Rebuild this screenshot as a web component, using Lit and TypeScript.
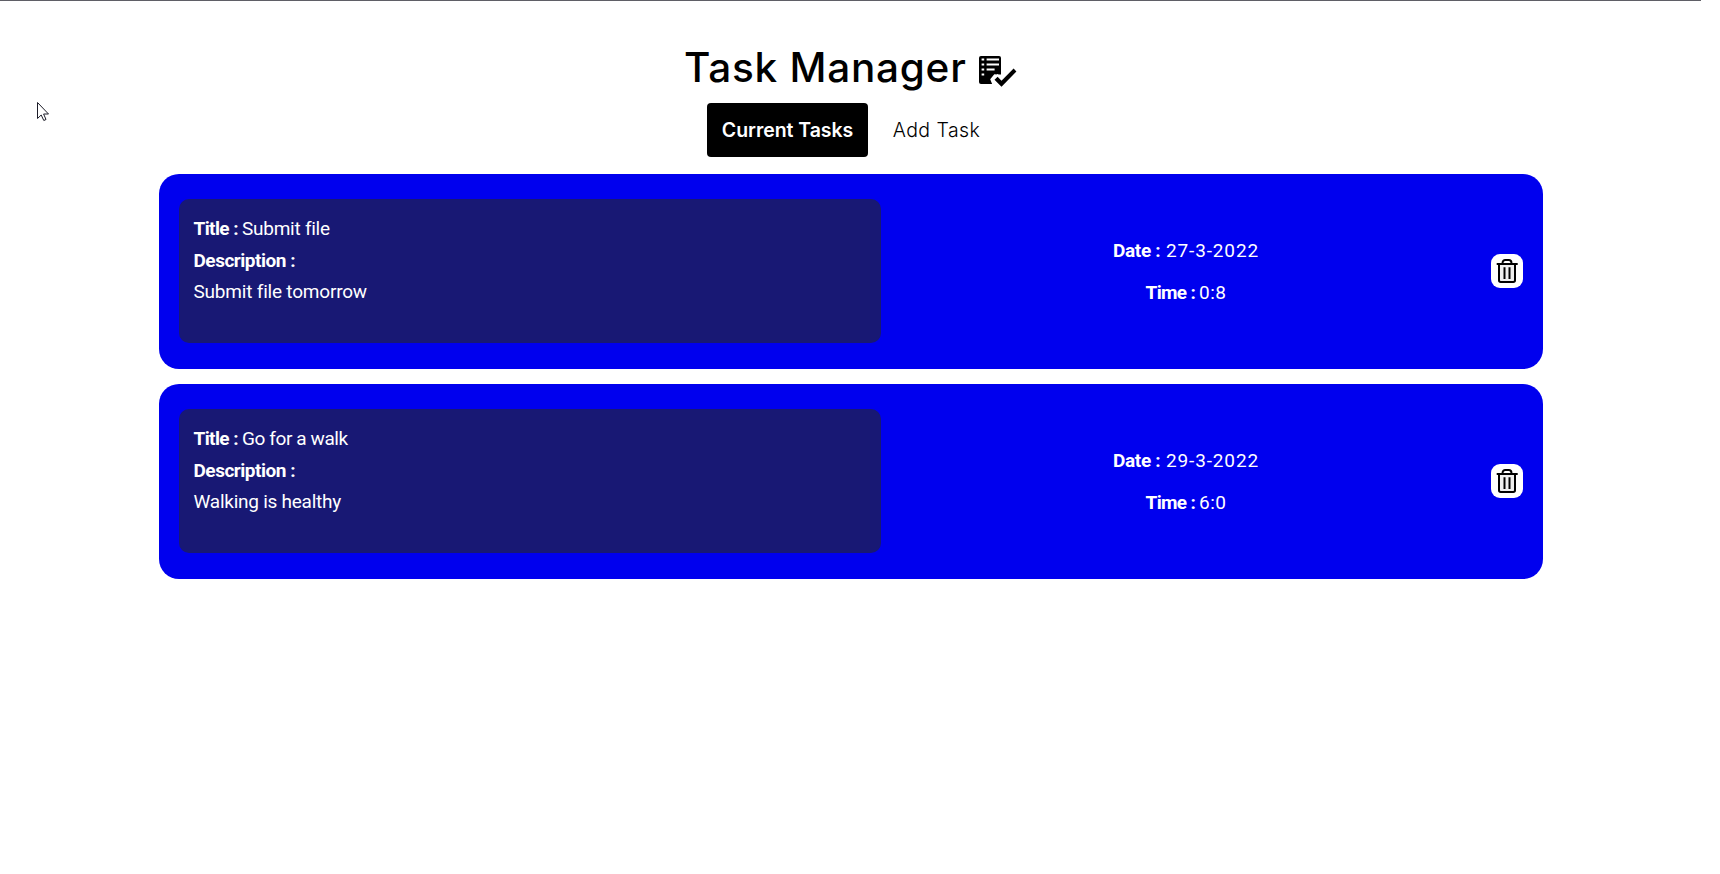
import { LitElement, html, css } from 'lit';
import { customElement, property, state } from 'lit/decorators.js';

interface Task {
  title: string;
  description: string;
  date: string;
  time: string;
}

@customElement('task-card')
class TaskCard extends LitElement {
  @property({ attribute: false }) task!: Task;

  static styles = css`
    :host {
      display: grid;
      grid-template-columns: 702px 1fr 32px;
      align-items: center;
      box-sizing: border-box;
      height: 195px;
      padding: 0 20px 1px;
      border-radius: 20px;
      background: #0000ee;
      color: #fff;
      font: 400 19px/32px Roboto, 'Noto Sans', sans-serif;
      white-space: nowrap;
    }
    .panel {
      box-sizing: border-box;
      height: 144px;
      padding: 14px 14.5px 0;
      border-radius: 10px;
      background: #181874;
    }
    .label {
      display: inline-block;
      font-weight: 700;
      letter-spacing: -0.48px;
    }
    .title-label { width: 48.5px; letter-spacing: -0.6px; }
    .date-label { width: 53px; letter-spacing: -0.35px; }
    .time-label { width: 53.5px; letter-spacing: -0.65px; }
    .when .label { text-align: left; }
    .name { letter-spacing: var(--name-tracking, -0.25px); }
    .description { line-height: 30px; letter-spacing: var(--description-tracking, -0.2px); }
    .when { text-align: center; line-height: 42px; padding-top: 1px; }
    .date { letter-spacing: 0.85px; }
    .time { letter-spacing: 0.5px; }
    button {
      width: 32px;
      height: 34px;
      padding: 0;
      border: 0;
      border-radius: 9px;
      background: #fff;
    }
    svg { display: block; }
  `;

  render() {
    const t = this.task;
    return html`
      <div class="panel">
        <div><span class="label title-label">Title :</span><span class="name">${t.title}</span></div>
        <div><span class="label">Description :</span></div>
        <div class="description">${t.description}</div>
      </div>
      <div class="when">
        <div><span class="label date-label">Date :</span><span class="date">${t.date}</span></div>
        <div><span class="label time-label">Time :</span><span class="time">${t.time}</span></div>
      </div>
      <button aria-label="Delete task">
        <svg width="32" height="34" viewBox="0 0 32 34" fill="none" stroke="#000" stroke-width="2">
          <path d="M8 10V26.2a1.7 1.7 0 0 0 1.7 1.7H22.3a1.7 1.7 0 0 0 1.7-1.7V10z" fill="#eee" />
          <path d="M5.7 10H26.7" />
          <path d="M11.6 10V8.6A2.6 2.6 0 0 1 14.2 6H17.8A2.6 2.6 0 0 1 20.4 8.6V10" />
          <path d="M13.5 13.3V25M18.5 13.3V25" />
        </svg>
      </button>
    `;
  }
}

@customElement('app-root')
class AppRoot extends LitElement {
  @state() private tasks: Task[] = [
    { title: 'Submit file', description: 'Submit file tomorrow', date: '27-3-2022', time: '0:8' },
    { title: 'Go for a walk', description: 'Walking is healthy', date: '29-3-2022', time: '6:0' },
  ];

  static styles = css`
    :host {
      display: block;
      box-sizing: border-box;
      width: 1720px;
      height: 874px;
      overflow: hidden;
      background: #fff;
      color: #000;
      font-family: Inter, sans-serif;
    }
    .edge { width: 1701px; height: 1px; background: #5f5f66; }
    .page { width: 1702px; }
    header {
      display: flex;
      justify-content: center;
      gap: 11px;
      height: 102px;
      padding-right: 1.5px;
      box-sizing: border-box;
    }
    h1 {
      margin: 41.5px 0 0;
      font-size: 40.5px;
      font-weight: 450;
      line-height: 50px;
      letter-spacing: 0.75px;
      white-space: nowrap;
    }
    .logo { margin-top: 55px; }
    nav { display: flex; justify-content: center; gap: 10px; }
    nav button {
      height: 54px;
      padding: 1px 0 0;
      border: 0;
      border-radius: 4px;
      background: none;
      color: #000;
      font: 300 19.5px/53px Inter, sans-serif;
      white-space: nowrap;
    }
    .current { width: 161px; background: #000; color: #fff; font-weight: 600; letter-spacing: -0.05px; }
    .add { width: 117px; letter-spacing: 0.45px; }
    main { display: grid; gap: 15px; width: 1384px; margin: 17px auto 0; }
    task-card:nth-child(2) { --name-tracking: -0.4px; --description-tracking: -0.25px; }
    .pointer { position: absolute; left: 36px; top: 101px; }
  `;

  render() {
    return html`
      <div class="edge"></div>
      <div class="page">
        <header>
          <h1>Task Manager</h1>
          <svg class="logo" width="39" height="33" viewBox="0 0 39 33">
            <path d="M3 0H21a2 2 0 0 1 2 2V28H3a2 2 0 0 1-2-2V2a2 2 0 0 1 2-2z" />
            <path d="M3.6 3.4h2.6M3.6 8.6h2.6M3.6 13.6h2.6M3.6 18.6h2.6M8.6 3.4H21M8.6 8.6H21M8.6 13.6h8" stroke="#fff" stroke-width="2" />
            <path d="M20.2 18.5L16.3 18.2L12.2 23.2L14.5 29H24V18.5z" fill="#fff" />
            <path d="M16.5 23.7L19.6 20.7L23.5 24.7L35.6 12.6L38.4 15.6L23.5 30.7z" stroke="#fff" stroke-width="4" />
            <path d="M16.5 23.7L19.6 20.7L23.5 24.7L35.6 12.6L38.4 15.6L23.5 30.7z" />
          </svg>
        </header>
        <nav>
          <button class="current">Current Tasks</button>
          <button class="add">Add Task</button>
        </nav>
        <main>${this.tasks.map((task) => html`<task-card .task=${task}></task-card>`)}</main>
      </div>
      <svg class="pointer" width="15" height="22" viewBox="0 0 15 22">
        <path d="M1.5 1.5V17.5L5.2 14L7.8 19.5L10 18.5L7.6 13H12.5z" fill="#fff" stroke="#1c1c28" stroke-width="1" />
      </svg>
    `;
  }
}
